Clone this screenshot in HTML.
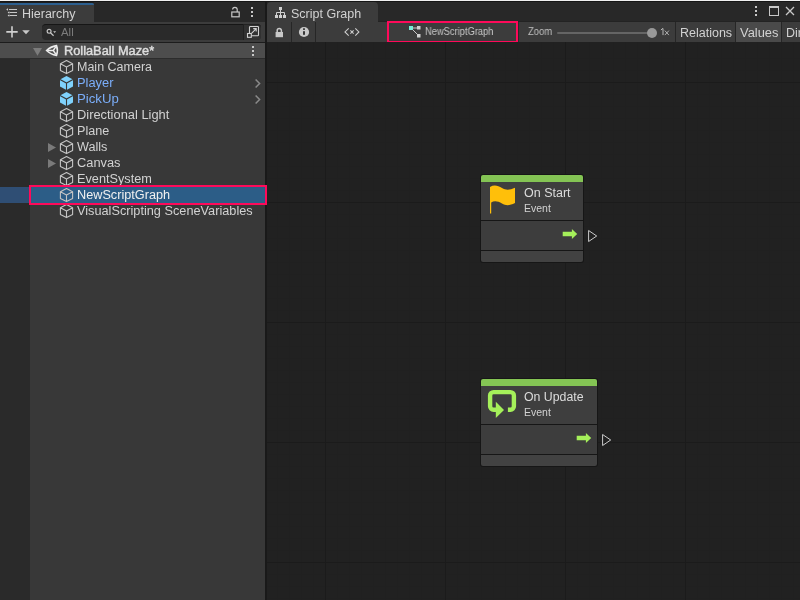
<!DOCTYPE html>
<html><head><meta charset="utf-8">
<style>
*{margin:0;padding:0;box-sizing:border-box}
html,body{width:800px;height:600px;overflow:hidden;background:#212121;font-family:"Liberation Sans",sans-serif;position:relative}
.a{position:absolute;display:block}
.t{position:absolute;white-space:nowrap;line-height:1;will-change:transform}
</style></head><body>
<!-- top window edge -->
<div class="a" style="left:0;top:0;width:800px;height:1px;background:#f0f0f0"></div>
<div class="a" style="left:0;top:1px;width:800px;height:1px;background:#161616"></div>

<!-- ===== HIERARCHY ===== -->
<div class="a" style="left:0;top:2px;width:265px;height:20px;background:#282828"></div>
<div class="a" style="left:0;top:2px;width:94px;height:20px;background:#3c3c3c;border-top-right-radius:3px"></div>
<div class="a" style="left:0;top:2px;width:94px;height:1px;background:#1e1e1e"></div>
<div class="a" style="left:0;top:3px;width:94px;height:2px;background:#2c5f8f;border-top-right-radius:2px"></div>
<svg class="a" style="left:5px;top:7px" width="14" height="12">
  <path d="M4 2.5 H12 M4.5 5.5 H12 M4.5 8.5 H12" stroke="#c8c8c8" stroke-width="1.2"/>
  <path d="M1.2 2.5 L3 1.2 L3 3.8 Z M2.6 5.5 L4.3 4.2 L4.3 6.8 Z M2.6 8.5 L4.3 7.2 L4.3 9.8 Z" fill="#d0d0d0"/>
</svg>
<div class="t" style="left:22px;top:8px;font-size:12.5px;color:#d2d2d2">Hierarchy</div>
<!-- unlock icon -->
<svg class="a" style="left:229px;top:5px" width="12" height="14">
  <rect x="2.8" y="7" width="7.4" height="4.8" fill="none" stroke="#c8c8c8" stroke-width="1.2"/>
  <path d="M3.6 4.6 A2.3 2.3 0 0 1 8.2 4.6 V7" fill="none" stroke="#c8c8c8" stroke-width="1.2"/>
</svg>
<!-- kebab -->
<div class="a" style="left:251px;top:7px;width:2px;height:2px;background:#c8c8c8"></div>
<div class="a" style="left:251px;top:11px;width:2px;height:2px;background:#c8c8c8"></div>
<div class="a" style="left:251px;top:14.5px;width:2px;height:2px;background:#c8c8c8"></div>

<!-- toolbar -->
<div class="a" style="left:0;top:22px;width:265px;height:20px;background:#3c3c3c"></div>
<div class="a" style="left:0;top:42px;width:265px;height:1px;background:#1c1c1c"></div>
<svg class="a" style="left:5px;top:25px" width="28" height="14">
  <path d="M7 1.2 V12.6 M1.3 6.9 H12.7" stroke="#d0d0d0" stroke-width="1.6"/>
  <path d="M17.2 5.2 L24.8 5.2 L21 9.2 Z" fill="#c8c8c8"/>
</svg>
<!-- search field -->
<div class="a" style="left:42px;top:24px;width:219px;height:16px;background:#2a2a2a;border-radius:4px;border-top:1px solid #161616"></div>
<div class="a" style="left:243px;top:24px;width:18px;height:16px;background:#313131;border-radius:0 4px 4px 0;border-left:1px solid #202020;border-top:1px solid #232323"></div>
<svg class="a" style="left:45px;top:26px" width="14" height="12">
  <circle cx="4.1" cy="5.3" r="1.95" fill="none" stroke="#c8c8c8" stroke-width="1.15"/>
  <path d="M5.5 6.8 L8.6 9.7" stroke="#c8c8c8" stroke-width="1.2"/>
  <path d="M8.2 5.3 L11.1 5.3 L9.65 7 Z" fill="#c8c8c8"/>
</svg>
<div class="t" style="left:61px;top:26.5px;font-size:11.4px;color:#7c7c7c">All</div>
<svg class="a" style="left:246px;top:25px" width="15" height="14">
  <rect x="3.5" y="1.5" width="9" height="9.2" rx="0.8" fill="none" stroke="#d0d0d0" stroke-width="1.1"/>
  <rect x="1.5" y="8.5" width="3.8" height="3.8" fill="#313131" stroke="#d0d0d0" stroke-width="1.1"/>
  <path d="M5.5 8.3 L10 3.8 M7.2 3.6 H10.2 V6.6" fill="none" stroke="#d0d0d0" stroke-width="1.1"/>
</svg>

<!-- scene header -->
<div class="a" style="left:0;top:43px;width:265px;height:15px;background:#4d4d4d"></div>
<div class="a" style="left:0;top:58px;width:265px;height:1px;background:#2c2c2c"></div>
<svg class="a" style="left:32px;top:45px" width="12" height="12"><path d="M1 3 L10 3 L5.5 10.8 Z" fill="#7b7b7b"/></svg>
<svg class="a" style="left:45px;top:43px" width="15" height="15" viewBox="0 0 15 15">
  <path d="M1.6 7.5 Q5.4 3.6 11.5 2.6 Q13.3 7.5 11.5 12.4 Q5.4 11.4 1.6 7.5 Z" fill="none" stroke="#ececec" stroke-width="1.6" stroke-linejoin="miter"/>
  <path d="M2.5 7.5 H8.3 L10.9 3.6 M8.3 7.5 L10.9 11.4" fill="none" stroke="#ececec" stroke-width="1.5"/>
</svg>
<div class="t" style="left:64px;top:45px;font-size:12.5px;color:#dedede;-webkit-text-stroke:0.45px #dedede;transform:scaleX(1.022);transform-origin:0 0">RollaBall Maze*</div>
<div class="a" style="left:252px;top:46px;width:2px;height:2px;background:#c8c8c8"></div>
<div class="a" style="left:252px;top:50px;width:2px;height:2px;background:#c8c8c8"></div>
<div class="a" style="left:252px;top:54px;width:2px;height:2px;background:#c8c8c8"></div>

<!-- list -->
<div class="a" style="left:0;top:59px;width:30px;height:541px;background:#2a2a2a"></div>
<div class="a" style="left:30px;top:59px;width:235px;height:541px;background:#383838"></div>
<svg class="a" style="left:59px;top:59px" width="16" height="16"><path d="M7.5 1.5 L13.6 4.7 L13.6 11.4 L7.5 14.6 L1.4 11.4 L1.4 4.7 Z M1.4 4.7 L7.5 7.9 L13.6 4.7 M7.5 7.9 L7.5 14.6" stroke="#c4c4c4" stroke-width="1.1" fill="none" stroke-linejoin="round"/></svg>
<div class="t" style="left:77px;top:61px;font-size:12.5px;color:#d2d2d2;transform:scaleX(1.0);transform-origin:0 0">Main Camera</div>
<svg class="a" style="left:59px;top:75px" width="16" height="16"><path d="M7.5 1 L14 4.4 L14 11.6 L7.5 15 L1 11.6 L1 4.4 Z" fill="#80d2fc"/><path d="M1 4.4 L7.5 8 L14 4.4 M7.5 8 L7.5 15" stroke="#383838" stroke-width="1.1" fill="none"/></svg>
<div class="t" style="left:77px;top:77px;font-size:12.5px;color:#7baefa;transform:scaleX(1.03);transform-origin:0 0">Player</div>
<svg class="a" style="left:253px;top:75px" width="10" height="16"><path d="M2.6 4.5 L6.6 8.5 L2.6 12.5" stroke="#8a8a8a" stroke-width="1.5" fill="none"/></svg>
<svg class="a" style="left:59px;top:91px" width="16" height="16"><path d="M7.5 1 L14 4.4 L14 11.6 L7.5 15 L1 11.6 L1 4.4 Z" fill="#80d2fc"/><path d="M1 4.4 L7.5 8 L14 4.4 M7.5 8 L7.5 15" stroke="#383838" stroke-width="1.1" fill="none"/></svg>
<div class="t" style="left:77px;top:93px;font-size:12.5px;color:#7baefa;transform:scaleX(1.055);transform-origin:0 0">PickUp</div>
<svg class="a" style="left:253px;top:91px" width="10" height="16"><path d="M2.6 4.5 L6.6 8.5 L2.6 12.5" stroke="#8a8a8a" stroke-width="1.5" fill="none"/></svg>
<svg class="a" style="left:59px;top:107px" width="16" height="16"><path d="M7.5 1.5 L13.6 4.7 L13.6 11.4 L7.5 14.6 L1.4 11.4 L1.4 4.7 Z M1.4 4.7 L7.5 7.9 L13.6 4.7 M7.5 7.9 L7.5 14.6" stroke="#c4c4c4" stroke-width="1.1" fill="none" stroke-linejoin="round"/></svg>
<div class="t" style="left:77px;top:109px;font-size:12.5px;color:#d2d2d2;transform:scaleX(1.03);transform-origin:0 0">Directional Light</div>
<svg class="a" style="left:59px;top:123px" width="16" height="16"><path d="M7.5 1.5 L13.6 4.7 L13.6 11.4 L7.5 14.6 L1.4 11.4 L1.4 4.7 Z M1.4 4.7 L7.5 7.9 L13.6 4.7 M7.5 7.9 L7.5 14.6" stroke="#c4c4c4" stroke-width="1.1" fill="none" stroke-linejoin="round"/></svg>
<div class="t" style="left:77px;top:125px;font-size:12.5px;color:#d2d2d2;transform:scaleX(1.01);transform-origin:0 0">Plane</div>
<svg class="a" style="left:47px;top:139px" width="10" height="16"><path d="M1 4 L9 8.5 L1 13 Z" fill="#7a7a7a"/></svg>
<svg class="a" style="left:59px;top:139px" width="16" height="16"><path d="M7.5 1.5 L13.6 4.7 L13.6 11.4 L7.5 14.6 L1.4 11.4 L1.4 4.7 Z M1.4 4.7 L7.5 7.9 L13.6 4.7 M7.5 7.9 L7.5 14.6" stroke="#c4c4c4" stroke-width="1.1" fill="none" stroke-linejoin="round"/></svg>
<div class="t" style="left:77px;top:141px;font-size:12.5px;color:#d2d2d2;transform:scaleX(1.01);transform-origin:0 0">Walls</div>
<svg class="a" style="left:47px;top:155px" width="10" height="16"><path d="M1 4 L9 8.5 L1 13 Z" fill="#7a7a7a"/></svg>
<svg class="a" style="left:59px;top:155px" width="16" height="16"><path d="M7.5 1.5 L13.6 4.7 L13.6 11.4 L7.5 14.6 L1.4 11.4 L1.4 4.7 Z M1.4 4.7 L7.5 7.9 L13.6 4.7 M7.5 7.9 L7.5 14.6" stroke="#c4c4c4" stroke-width="1.1" fill="none" stroke-linejoin="round"/></svg>
<div class="t" style="left:77px;top:157px;font-size:12.5px;color:#d2d2d2;transform:scaleX(1.027);transform-origin:0 0">Canvas</div>
<svg class="a" style="left:59px;top:171px" width="16" height="16"><path d="M7.5 1.5 L13.6 4.7 L13.6 11.4 L7.5 14.6 L1.4 11.4 L1.4 4.7 Z M1.4 4.7 L7.5 7.9 L13.6 4.7 M7.5 7.9 L7.5 14.6" stroke="#c4c4c4" stroke-width="1.1" fill="none" stroke-linejoin="round"/></svg>
<div class="t" style="left:77px;top:173px;font-size:12.5px;color:#d2d2d2;transform:scaleX(1.017);transform-origin:0 0">EventSystem</div>
<div class="a" style="left:0;top:187px;width:30px;height:16px;background:#2f4e74"></div>
<div class="a" style="left:30px;top:187px;width:235px;height:16px;background:#2c5d87"></div>
<svg class="a" style="left:59px;top:187px" width="16" height="16"><path d="M7.5 1.5 L13.6 4.7 L13.6 11.4 L7.5 14.6 L1.4 11.4 L1.4 4.7 Z M1.4 4.7 L7.5 7.9 L13.6 4.7 M7.5 7.9 L7.5 14.6" stroke="#c4c4c4" stroke-width="1.1" fill="none" stroke-linejoin="round"/></svg>
<div class="t" style="left:77px;top:189px;font-size:12.5px;color:#f0f0f0;transform:scaleX(1.015);transform-origin:0 0">NewScriptGraph</div>
<svg class="a" style="left:59px;top:203px" width="16" height="16"><path d="M7.5 1.5 L13.6 4.7 L13.6 11.4 L7.5 14.6 L1.4 11.4 L1.4 4.7 Z M1.4 4.7 L7.5 7.9 L13.6 4.7 M7.5 7.9 L7.5 14.6" stroke="#c4c4c4" stroke-width="1.1" fill="none" stroke-linejoin="round"/></svg>
<div class="t" style="left:77px;top:205px;font-size:12.5px;color:#d2d2d2;transform:scaleX(1.018);transform-origin:0 0">VisualScripting SceneVariables</div>
<!-- divider -->
<div class="a" style="left:265px;top:2px;width:2px;height:598px;background:#191919"></div>
<!-- selection highlight box -->
<div class="a" style="left:29px;top:185px;width:238px;height:20px;border:2px solid #fe0a5a;z-index:5"></div>

<!-- ===== SCRIPT GRAPH ===== -->
<div class="a" style="left:267px;top:2px;width:533px;height:20px;background:#282828"></div>
<div class="a" style="left:267px;top:2px;width:111px;height:20px;background:#3c3c3c;border-radius:4px 4px 0 0"></div>
<svg class="a" style="left:274px;top:6px" width="14" height="14">
  <rect x="5" y="1" width="3" height="3" fill="#d0d0d0"/>
  <rect x="1" y="9" width="3" height="3" fill="#d0d0d0"/>
  <rect x="5" y="9" width="3" height="3" fill="#d0d0d0"/>
  <rect x="9" y="9" width="3" height="3" fill="#d0d0d0"/>
  <path d="M6.5 4 V9 M2.5 9 V6.5 H10.5 V9" fill="none" stroke="#d0d0d0" stroke-width="1"/>
</svg>
<div class="t" style="left:291px;top:8px;font-size:12.5px;color:#d2d2d2">Script Graph</div>
<!-- window icons -->
<div class="a" style="left:755px;top:6px;width:2px;height:2px;background:#c8c8c8"></div>
<div class="a" style="left:755px;top:10px;width:2px;height:2px;background:#c8c8c8"></div>
<div class="a" style="left:755px;top:14px;width:2px;height:2px;background:#c8c8c8"></div>
<div class="a" style="left:769px;top:6px;width:10px;height:10px;border:1px solid #c8c8c8;border-top-width:2px"></div>
<svg class="a" style="left:785px;top:6px" width="10" height="10"><path d="M1 1 L9 9 M9 1 L1 9" stroke="#c8c8c8" stroke-width="1.3"/></svg>

<!-- graph toolbar -->
<div class="a" style="left:378px;top:21px;width:422px;height:1px;background:#232323"></div>
<div class="a" style="left:267px;top:22px;width:533px;height:20px;background:#3c3c3c"></div>
<div class="a" style="left:291px;top:22px;width:1px;height:20px;background:#262626"></div>
<div class="a" style="left:315px;top:22px;width:1px;height:20px;background:#262626"></div>
<svg class="a" style="left:274px;top:26px" width="12" height="13">
  <path d="M3.2 6 V4.6 A2.1 2.1 0 0 1 7.4 4.6 V6" fill="none" stroke="#c8c8c8" stroke-width="1.5"/>
  <rect x="1.6" y="6" width="7.4" height="5.2" fill="#c8c8c8"/>
</svg>
<svg class="a" style="left:298px;top:26px" width="12" height="12">
  <circle cx="6" cy="6" r="5.1" fill="#c8c8c8"/>
  <rect x="5.1" y="2.3" width="1.8" height="1.6" fill="#262626"/>
  <rect x="5.1" y="5.2" width="1.8" height="3.6" fill="#262626"/>
</svg>
<svg class="a" style="left:344px;top:27px" width="16" height="10">
  <path d="M4.7 1.35 L0.95 4.95 L4.7 8.55 M11.3 1.35 L14.9 4.95 L11.3 8.55 M6.4 3.3 L9.6 6.6 M9.6 3.3 L6.4 6.6" fill="none" stroke="#d0d0d0" stroke-width="1.05"/>
</svg>
<!-- breadcrumb -->
<div class="a" style="left:389px;top:23px;width:127px;height:18px;background:#3c3c3c"></div>
<svg class="a" style="left:408px;top:25px" width="14" height="14">
  <path d="M3 3 H10.5 M3 3 L10.5 10.5" stroke="#c8c8c8" stroke-width="1"/>
  <rect x="1" y="1" width="4" height="4" fill="#78eed8"/>
  <rect x="9" y="1" width="3.5" height="3.5" fill="#d0d0d0"/>
  <rect x="9" y="9" width="3.5" height="3.5" fill="#d0d0d0"/>
</svg>
<div class="t" style="left:425px;top:27.4px;font-size:10.3px;color:#c8c8c8;transform:scaleX(0.906);transform-origin:0 0">NewScriptGraph</div>
<div class="a" style="left:387px;top:21px;width:131px;height:22px;border:2px solid #fe0a5a"></div>
<div class="a" style="left:518px;top:22px;width:1px;height:20px;background:#2a2a2a"></div>
<!-- zoom -->
<div class="t" style="left:528px;top:27.2px;font-size:10.3px;color:#c0c0c0;transform:scaleX(0.917);transform-origin:0 0">Zoom</div>
<div class="a" style="left:557px;top:32px;width:95px;height:2px;background:#656565;border-radius:1px"></div>
<div class="a" style="left:647px;top:28px;width:10px;height:10px;background:#999999;border-radius:50%"></div>
<svg class="a" style="left:660px;top:27px" width="11" height="10"><path d="M3 1.5 V8.1 M0.9 3 L3 1.3" fill="none" stroke="#b8b8b8" stroke-width="1"/><path d="M4.8 3.6 L8.9 8.1 M8.9 3.6 L4.8 8.1" fill="none" stroke="#b8b8b8" stroke-width="0.95"/></svg>
<div class="a" style="left:675px;top:22px;width:1px;height:20px;background:#262626"></div>
<div class="t" style="left:680px;top:27px;font-size:12.5px;color:#d2d2d2">Relations</div>
<div class="a" style="left:735px;top:22px;width:1px;height:20px;background:#262626"></div>
<div class="a" style="left:736px;top:22px;width:45px;height:20px;background:#4a4a4a"></div>
<div class="t" style="left:740px;top:27px;font-size:12.5px;color:#d2d2d2;transform:scaleX(1.03);transform-origin:0 0">Values</div>
<div class="a" style="left:781px;top:22px;width:1px;height:20px;background:#262626"></div>
<div class="t" style="left:786px;top:27px;font-size:12.5px;color:#d2d2d2">Dir</div>

<!-- graph area -->
<div class="a" style="left:267px;top:42px;width:533px;height:558px;background:#212121"></div>
<div class="a" style="left:277px;top:42px;width:1px;height:558px;background:#202020"></div>
<div class="a" style="left:289px;top:42px;width:1px;height:558px;background:#202020"></div>
<div class="a" style="left:301px;top:42px;width:1px;height:558px;background:#202020"></div>
<div class="a" style="left:313px;top:42px;width:1px;height:558px;background:#202020"></div>
<div class="a" style="left:337px;top:42px;width:1px;height:558px;background:#202020"></div>
<div class="a" style="left:349px;top:42px;width:1px;height:558px;background:#202020"></div>
<div class="a" style="left:361px;top:42px;width:1px;height:558px;background:#202020"></div>
<div class="a" style="left:373px;top:42px;width:1px;height:558px;background:#202020"></div>
<div class="a" style="left:385px;top:42px;width:1px;height:558px;background:#202020"></div>
<div class="a" style="left:397px;top:42px;width:1px;height:558px;background:#202020"></div>
<div class="a" style="left:409px;top:42px;width:1px;height:558px;background:#202020"></div>
<div class="a" style="left:421px;top:42px;width:1px;height:558px;background:#202020"></div>
<div class="a" style="left:433px;top:42px;width:1px;height:558px;background:#202020"></div>
<div class="a" style="left:457px;top:42px;width:1px;height:558px;background:#202020"></div>
<div class="a" style="left:469px;top:42px;width:1px;height:558px;background:#202020"></div>
<div class="a" style="left:481px;top:42px;width:1px;height:558px;background:#202020"></div>
<div class="a" style="left:493px;top:42px;width:1px;height:558px;background:#202020"></div>
<div class="a" style="left:505px;top:42px;width:1px;height:558px;background:#202020"></div>
<div class="a" style="left:517px;top:42px;width:1px;height:558px;background:#202020"></div>
<div class="a" style="left:529px;top:42px;width:1px;height:558px;background:#202020"></div>
<div class="a" style="left:541px;top:42px;width:1px;height:558px;background:#202020"></div>
<div class="a" style="left:553px;top:42px;width:1px;height:558px;background:#202020"></div>
<div class="a" style="left:577px;top:42px;width:1px;height:558px;background:#202020"></div>
<div class="a" style="left:589px;top:42px;width:1px;height:558px;background:#202020"></div>
<div class="a" style="left:601px;top:42px;width:1px;height:558px;background:#202020"></div>
<div class="a" style="left:613px;top:42px;width:1px;height:558px;background:#202020"></div>
<div class="a" style="left:625px;top:42px;width:1px;height:558px;background:#202020"></div>
<div class="a" style="left:637px;top:42px;width:1px;height:558px;background:#202020"></div>
<div class="a" style="left:649px;top:42px;width:1px;height:558px;background:#202020"></div>
<div class="a" style="left:661px;top:42px;width:1px;height:558px;background:#202020"></div>
<div class="a" style="left:673px;top:42px;width:1px;height:558px;background:#202020"></div>
<div class="a" style="left:697px;top:42px;width:1px;height:558px;background:#202020"></div>
<div class="a" style="left:709px;top:42px;width:1px;height:558px;background:#202020"></div>
<div class="a" style="left:721px;top:42px;width:1px;height:558px;background:#202020"></div>
<div class="a" style="left:733px;top:42px;width:1px;height:558px;background:#202020"></div>
<div class="a" style="left:745px;top:42px;width:1px;height:558px;background:#202020"></div>
<div class="a" style="left:757px;top:42px;width:1px;height:558px;background:#202020"></div>
<div class="a" style="left:769px;top:42px;width:1px;height:558px;background:#202020"></div>
<div class="a" style="left:781px;top:42px;width:1px;height:558px;background:#202020"></div>
<div class="a" style="left:793px;top:42px;width:1px;height:558px;background:#202020"></div>
<div class="a" style="left:267px;top:58px;width:533px;height:1px;background:#202020"></div>
<div class="a" style="left:267px;top:70px;width:533px;height:1px;background:#202020"></div>
<div class="a" style="left:267px;top:94px;width:533px;height:1px;background:#202020"></div>
<div class="a" style="left:267px;top:106px;width:533px;height:1px;background:#202020"></div>
<div class="a" style="left:267px;top:118px;width:533px;height:1px;background:#202020"></div>
<div class="a" style="left:267px;top:130px;width:533px;height:1px;background:#202020"></div>
<div class="a" style="left:267px;top:142px;width:533px;height:1px;background:#202020"></div>
<div class="a" style="left:267px;top:154px;width:533px;height:1px;background:#202020"></div>
<div class="a" style="left:267px;top:166px;width:533px;height:1px;background:#202020"></div>
<div class="a" style="left:267px;top:178px;width:533px;height:1px;background:#202020"></div>
<div class="a" style="left:267px;top:190px;width:533px;height:1px;background:#202020"></div>
<div class="a" style="left:267px;top:214px;width:533px;height:1px;background:#202020"></div>
<div class="a" style="left:267px;top:226px;width:533px;height:1px;background:#202020"></div>
<div class="a" style="left:267px;top:238px;width:533px;height:1px;background:#202020"></div>
<div class="a" style="left:267px;top:250px;width:533px;height:1px;background:#202020"></div>
<div class="a" style="left:267px;top:262px;width:533px;height:1px;background:#202020"></div>
<div class="a" style="left:267px;top:274px;width:533px;height:1px;background:#202020"></div>
<div class="a" style="left:267px;top:286px;width:533px;height:1px;background:#202020"></div>
<div class="a" style="left:267px;top:298px;width:533px;height:1px;background:#202020"></div>
<div class="a" style="left:267px;top:310px;width:533px;height:1px;background:#202020"></div>
<div class="a" style="left:267px;top:334px;width:533px;height:1px;background:#202020"></div>
<div class="a" style="left:267px;top:346px;width:533px;height:1px;background:#202020"></div>
<div class="a" style="left:267px;top:358px;width:533px;height:1px;background:#202020"></div>
<div class="a" style="left:267px;top:370px;width:533px;height:1px;background:#202020"></div>
<div class="a" style="left:267px;top:382px;width:533px;height:1px;background:#202020"></div>
<div class="a" style="left:267px;top:394px;width:533px;height:1px;background:#202020"></div>
<div class="a" style="left:267px;top:406px;width:533px;height:1px;background:#202020"></div>
<div class="a" style="left:267px;top:418px;width:533px;height:1px;background:#202020"></div>
<div class="a" style="left:267px;top:430px;width:533px;height:1px;background:#202020"></div>
<div class="a" style="left:267px;top:454px;width:533px;height:1px;background:#202020"></div>
<div class="a" style="left:267px;top:466px;width:533px;height:1px;background:#202020"></div>
<div class="a" style="left:267px;top:478px;width:533px;height:1px;background:#202020"></div>
<div class="a" style="left:267px;top:490px;width:533px;height:1px;background:#202020"></div>
<div class="a" style="left:267px;top:502px;width:533px;height:1px;background:#202020"></div>
<div class="a" style="left:267px;top:514px;width:533px;height:1px;background:#202020"></div>
<div class="a" style="left:267px;top:526px;width:533px;height:1px;background:#202020"></div>
<div class="a" style="left:267px;top:538px;width:533px;height:1px;background:#202020"></div>
<div class="a" style="left:267px;top:550px;width:533px;height:1px;background:#202020"></div>
<div class="a" style="left:267px;top:574px;width:533px;height:1px;background:#202020"></div>
<div class="a" style="left:267px;top:586px;width:533px;height:1px;background:#202020"></div>
<div class="a" style="left:267px;top:598px;width:533px;height:1px;background:#202020"></div>
<div class="a" style="left:325px;top:42px;width:1px;height:558px;background:#1b1b1b"></div>
<div class="a" style="left:445px;top:42px;width:1px;height:558px;background:#1b1b1b"></div>
<div class="a" style="left:565px;top:42px;width:1px;height:558px;background:#1b1b1b"></div>
<div class="a" style="left:685px;top:42px;width:1px;height:558px;background:#1b1b1b"></div>
<div class="a" style="left:267px;top:82px;width:533px;height:1px;background:#1b1b1b"></div>
<div class="a" style="left:267px;top:202px;width:533px;height:1px;background:#1b1b1b"></div>
<div class="a" style="left:267px;top:322px;width:533px;height:1px;background:#1b1b1b"></div>
<div class="a" style="left:267px;top:442px;width:533px;height:1px;background:#1b1b1b"></div>
<div class="a" style="left:267px;top:562px;width:533px;height:1px;background:#1b1b1b"></div>

<!-- On Start node -->
<div class="a" style="left:480px;top:174px;width:104px;height:89px;background:#161616;border-radius:3px"></div>
<div class="a" style="left:481px;top:175px;width:102px;height:7px;background:#84c454;border-radius:2px 2px 0 0"></div>
<div class="a" style="left:481px;top:182px;width:102px;height:38px;background:#3e3e3e"></div>
<div class="a" style="left:481px;top:221px;width:102px;height:29px;background:#3d3d3d"></div>
<div class="a" style="left:481px;top:251px;width:102px;height:11px;background:#424242;border-radius:0 0 2px 2px"></div>
<svg class="a" style="left:488px;top:184px" width="30" height="30">
  <path d="M2 3 C6 0.5 10 1.5 14 4 C18 6.5 22 6 27 3.8 V19 C22 21.5 18 22 14 19.5 C10 17 6 16.5 3.2 18.5 V29.5 H2 Z" fill="#ffbf0a"/>
</svg>
<div class="t" style="left:524px;top:187px;font-size:12.5px;color:#dcdcdc">On Start</div>
<div class="t" style="left:524px;top:203px;font-size:10.5px;color:#d2d2d2">Event</div>
<svg class="a" style="left:561px;top:227px" width="18" height="14">
  <path d="M1.7 4.8 H10.9 V2 L16.2 7 L10.9 12 V9.2 H1.7 Z" fill="#a5f05a"/>
</svg>
<svg class="a" style="left:586px;top:229px" width="12" height="14">
  <path d="M2.6 1.5 L10.7 7 L2.6 12.5 Z" fill="none" stroke="#d4d4d4" stroke-width="0.95"/>
</svg>

<!-- On Update node -->
<div class="a" style="left:480px;top:378px;width:118px;height:89px;background:#161616;border-radius:3px"></div>
<div class="a" style="left:481px;top:379px;width:116px;height:7px;background:#84c454;border-radius:2px 2px 0 0"></div>
<div class="a" style="left:481px;top:386px;width:116px;height:38px;background:#3e3e3e"></div>
<div class="a" style="left:481px;top:425px;width:116px;height:29px;background:#3d3d3d"></div>
<div class="a" style="left:481px;top:455px;width:116px;height:11px;background:#424242;border-radius:0 0 2px 2px"></div>
<svg class="a" style="left:486px;top:388px" width="32" height="32">
  <path d="M21.9 21.8 H24.4 A3.5 3.5 0 0 0 27.9 18.3 V7.6 A3.5 3.5 0 0 0 24.4 4.1 H7.6 A3.5 3.5 0 0 0 4.1 7.6 V18.3 A3.5 3.5 0 0 0 7.6 21.8 H10.5" fill="none" stroke="#a5f05a" stroke-width="4.4"/>
  <path d="M9.8 13.7 L18 21.9 L9.8 30 Z" fill="#a5f05a"/>
</svg>
<div class="t" style="left:524px;top:391px;font-size:12.3px;color:#dcdcdc">On Update</div>
<div class="t" style="left:524px;top:407px;font-size:10.5px;color:#d2d2d2">Event</div>
<svg class="a" style="left:575px;top:431px" width="18" height="14">
  <path d="M1.7 4.8 H10.9 V2 L16.2 7 L10.9 12 V9.2 H1.7 Z" fill="#a5f05a"/>
</svg>
<svg class="a" style="left:600px;top:433px" width="12" height="14">
  <path d="M2.6 1.5 L10.7 7 L2.6 12.5 Z" fill="none" stroke="#d4d4d4" stroke-width="0.95"/>
</svg>
</body></html>
